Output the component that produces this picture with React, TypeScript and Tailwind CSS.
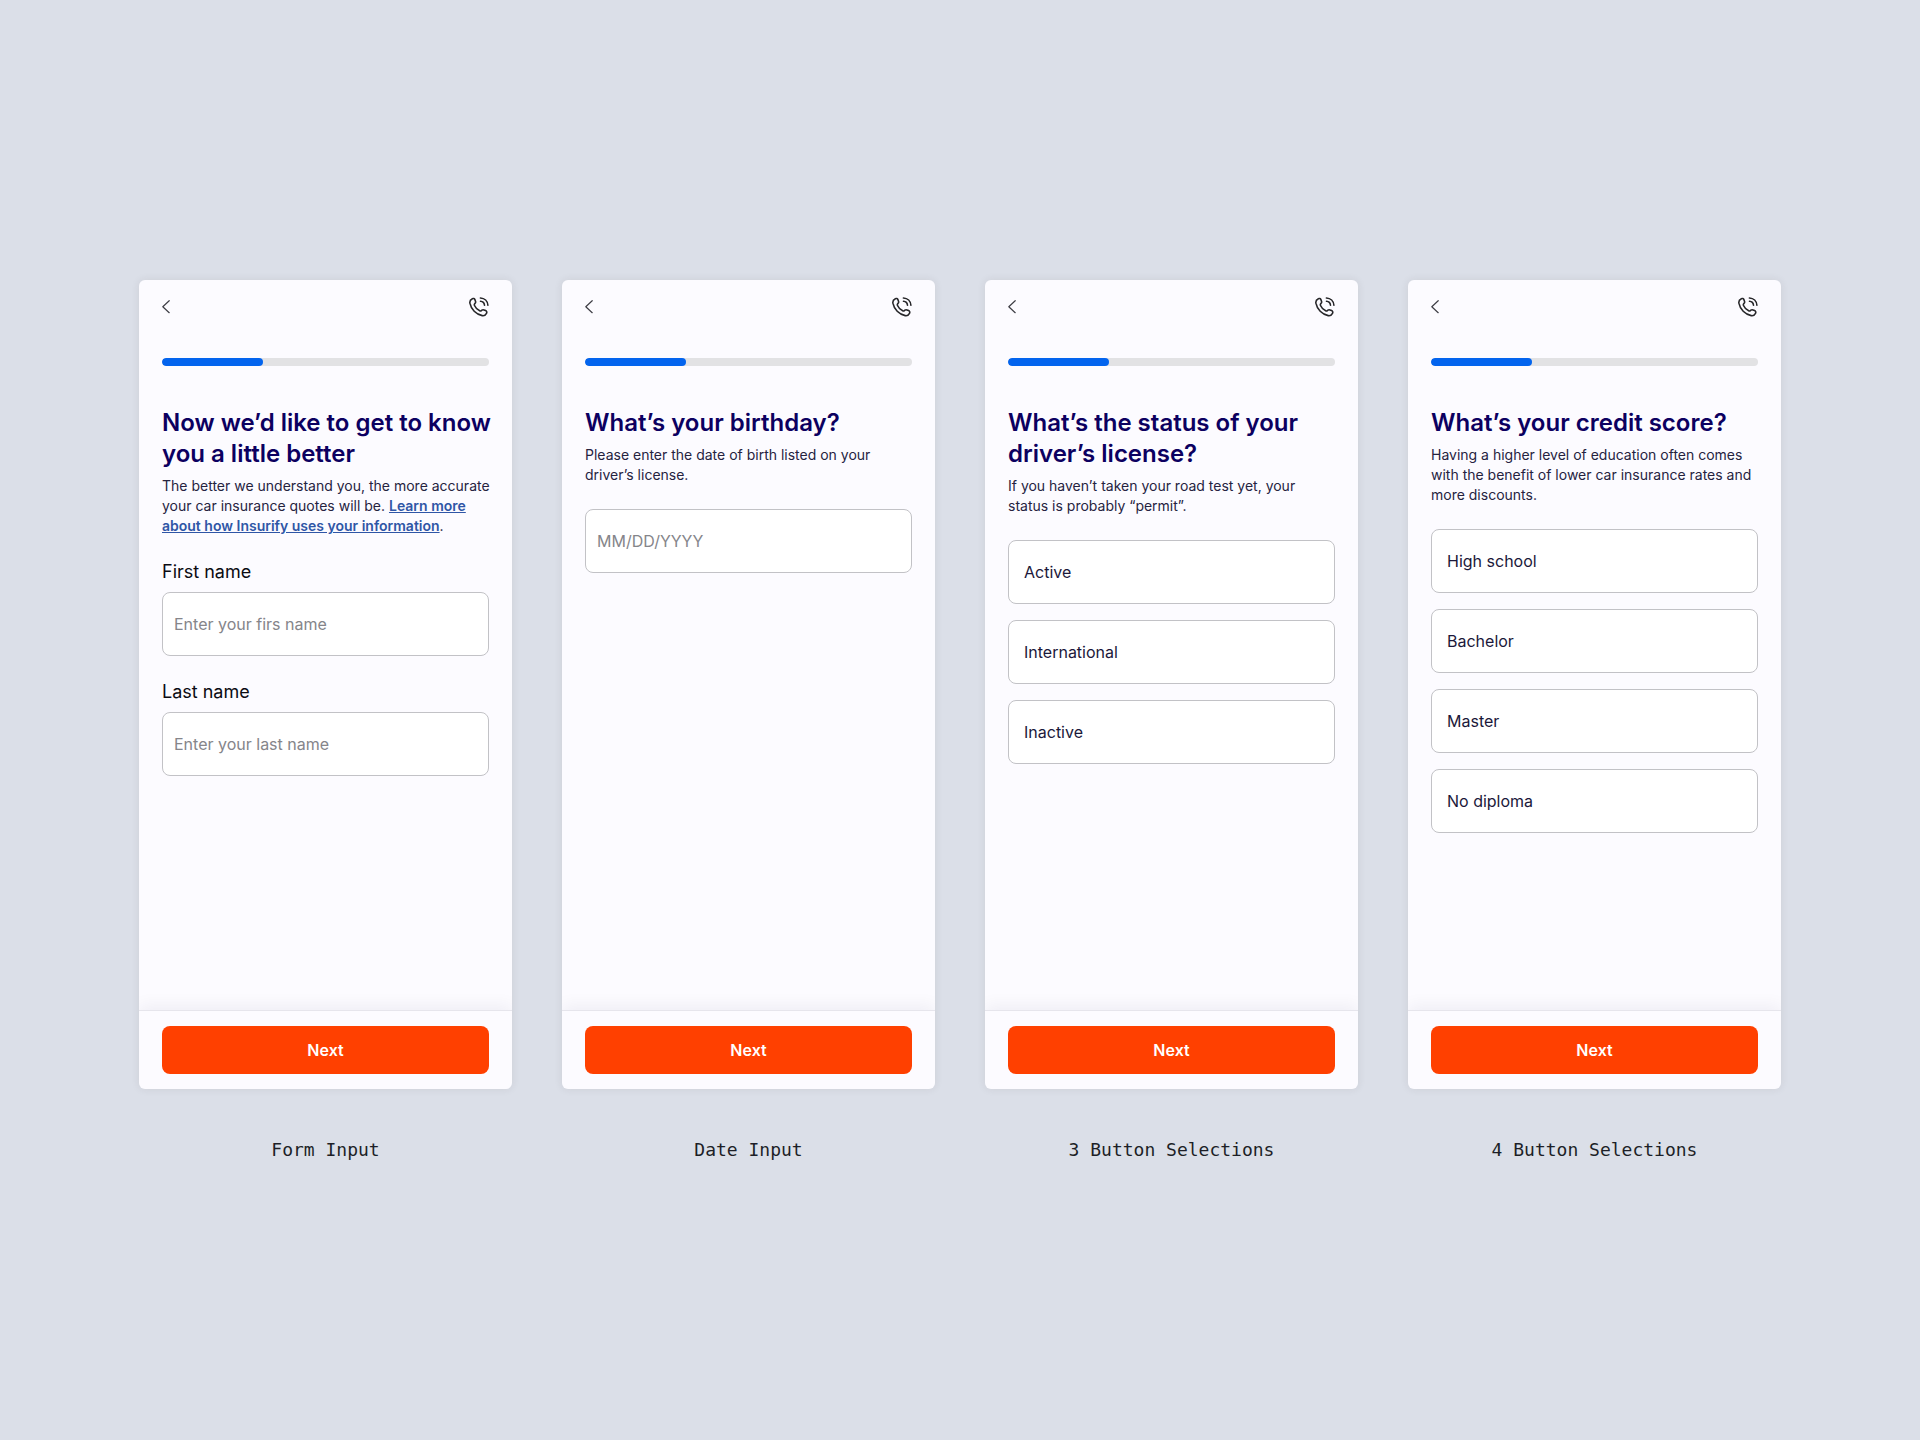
import { ReactNode, useState } from 'react';

function BackIcon() {
  return (
    <svg width="9" height="14" viewBox="0 0 9 14" fill="none" stroke="#3f3f46" strokeWidth="1.2" strokeLinecap="round" strokeLinejoin="round" aria-hidden="true">
      <path d="M7.2.7.8 6.7l6.4 6" />
    </svg>
  );
}

function PhoneIcon() {
  return (
    <svg width="20" height="20" viewBox="0 0 20 20" fill="none" stroke="#27272a" strokeWidth="1.6" strokeLinecap="round" strokeLinejoin="round" aria-hidden="true">
      <path d="M11.4 1c4.1.2 7.2 3.2 7.5 7.3" />
      <path d="M11.5 4.3c2.2.2 3.8 1.7 4 3.9" />
      <path d="M3.3 1.7c1-.5 2.200-.1 2.600.9l.6 1.600c.3.8.1 1.500-.4 2.100l-.4.5c-.4.5-.5 1.100-.2 1.700 1 2.300 2.900 4.200 5.200 5.300.6.3 1.200.2 1.700-.2l.5-.4c.6-.5 1.300-.6 2-.3l1.700.7c1.100.5 1.500 1.700.9 2.700-.9 1.700-2.400 2.700-4.300 2.300C7.200 17.400 2 12.200.9 6.200.6 4.300 1.600 2.500 3.300 1.700Z" />
    </svg>
  );
}

function Progress({ value }: { value: number }) {
  return (
    <div
      role="progressbar"
      aria-valuenow={value}
      aria-valuemin={0}
      aria-valuemax={100}
      className="h-2 rounded-full bg-[#e2e2e4] overflow-hidden"
    >
      <div className="h-full rounded-full bg-[#0364ee]" style={{ width: `${value}%` }} />
    </div>
  );
}

type ScreenProps = {
  title: string;
  description: ReactNode;
  caption: string;
  children: ReactNode;
};

function Screen({ title, description, caption, children }: ScreenProps) {
  return (
    <figure className="flex flex-col">
      <div className="flex flex-col flex-1 min-h-[809px] rounded-md overflow-hidden bg-[#fcfbff] shadow-[0_0_8px_rgba(60,40,40,0.09)]">
        <div className="flex flex-col flex-1 gap-[41px] px-[23px] pt-[17px] pb-6">
          <div className="flex items-center justify-between h-5">
            <button type="button" aria-label="Back" className="cursor-pointer">
              <BackIcon />
            </button>
            <button type="button" aria-label="Call us" className="cursor-pointer">
              <PhoneIcon />
            </button>
          </div>
          <Progress value={31} />
          <div>
            <div className="-mr-[3px]">
              <h2 className="text-2xl leading-[31px] font-semibold text-[#0c0060]">{title}</h2>
              <p className="mt-[7px] text-sm leading-5 text-[#26233f]">{description}</p>
            </div>
            <div className="mt-6">{children}</div>
          </div>
        </div>
        <div className="px-[23px] py-[15px] border-t border-[#e6e5ec] shadow-[0_-4px_16px_rgba(20,20,60,0.06)]">
          <button type="button" className="w-full h-12 rounded-lg bg-[#ff4000] text-white text-base font-semibold cursor-pointer">
            Next
          </button>
        </div>
      </div>
      <figcaption className="mt-[51px] text-center text-lg leading-5 text-[#1d1f27] font-['DejaVu_Sans_Mono',monospace]">
        {caption}
      </figcaption>
    </figure>
  );
}

function TextField({ id, label, placeholder }: { id: string; label: string; placeholder: string }) {
  return (
    <div className="flex flex-col gap-2">
      <label htmlFor={id} className="text-lg leading-6 text-[#0b0b12]">
        {label}
      </label>
      <input
        id={id}
        type="text"
        placeholder={placeholder}
        className="w-full h-16 px-[11px] rounded-lg border border-[#c2c2c6] bg-white text-base placeholder:text-[#85858a]"
      />
    </div>
  );
}

function OptionList({ options }: { options: string[] }) {
  const [selected, setSelected] = useState('');

  return (
    <div className="flex flex-col gap-4">
      {options.map((option) => (
        <button
          key={option}
          type="button"
          aria-pressed={selected === option}
          onClick={() => setSelected(option)}
          className="w-full h-16 px-[15px] rounded-lg border border-[#c2c2c6] bg-white text-left text-base text-[#1b183a] cursor-pointer aria-pressed:border-[#0364ee]"
        >
          {option}
        </button>
      ))}
    </div>
  );
}

export default function App() {
  return (
    <main className="min-h-screen flex flex-col justify-center bg-[#dbdfe8] px-6 py-12 min-[1800px]:px-[139px] font-['Inter',sans-serif]">
      <div className="grid grid-cols-1 sm:grid-cols-2 xl:grid-cols-4 gap-[50px]">
        <Screen
          title="Now we’d like to get to know you a little better"
          caption="Form Input"
          description={
            <>
              The better we understand you, the more accurate your car insurance quotes will be.{' '}
              <a href="#information" className="font-semibold underline text-[#2f56a6]">
                Learn more about how Insurify uses your information
              </a>
              .
            </>
          }
        >
          <div className="flex flex-col gap-6">
            <TextField id="first-name" label="First name" placeholder="Enter your firs name" />
            <TextField id="last-name" label="Last name" placeholder="Enter your last name" />
          </div>
        </Screen>

        <Screen
          title="What’s your birthday?"
          caption="Date Input"
          description="Please enter the date of birth listed on your driver’s license."
        >
          <input
            type="text"
            aria-label="Date of birth"
            placeholder="MM/DD/YYYY"
            className="w-full h-16 px-[11px] rounded-lg border border-[#c2c2c6] bg-white text-base placeholder:text-[#85858a]"
          />
        </Screen>

        <Screen
          title="What’s the status of your driver’s license?"
          caption="3 Button Selections"
          description="If you haven’t taken your road test yet, your status is probably “permit”."
        >
          <OptionList options={['Active', 'International', 'Inactive']} />
        </Screen>

        <Screen
          title="What’s your credit score?"
          caption="4 Button Selections"
          description="Having a higher level of education often comes with the benefit of lower car insurance rates and more discounts."
        >
          <OptionList options={['High school', 'Bachelor', 'Master', 'No diploma']} />
        </Screen>
      </div>
    </main>
  );
}
